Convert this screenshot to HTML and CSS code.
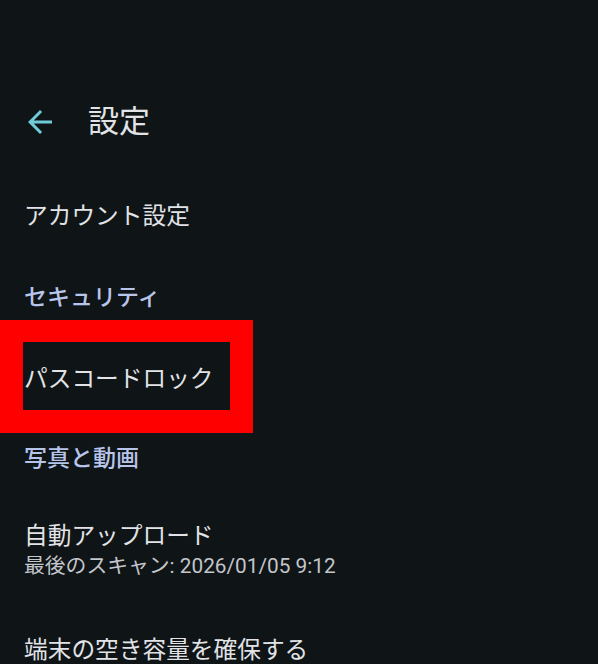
FILE: index.html
```html
<!DOCTYPE html>
<html lang="ja">
<head>
    <meta charset="utf-8">
    <title>設定</title>
    <link rel="stylesheet" href="styles.css">
</head>
<body>
    <div class="screen">
        <!-- Toolbar -->
        <div class="toolbar">
            <svg class="back" viewBox="0 0 24 24" width="36" height="36">
                <path d="M20 11H7.83l5.59-5.59L12 4l-8 8 8 8 1.41-1.41L7.83 13H20v-2z"/>
            </svg>
            <h1 class="title">設定</h1>
        </div>

        <!-- Preference list -->
        <div class="prefs">
            <div class="pref">アカウント設定</div>

            <div class="category">セキュリティ</div>
            <div class="pref marked">パスコードロック</div>

            <div class="category">写真と動画</div>
            <div class="pref two-line">
                <div>自動アップロード</div>
                <div class="summary">最後のスキャン: 2026/01/05 9:12</div>
            </div>
            <div class="pref">端末の空き容量を確保する</div>
        </div>
    </div>
</body>
</html>
```

FILE: styles.css
```css
html, body {
    margin: 0;
    padding: 0;
    background-color: #0f1417;
}

body {
    font-family: Roboto, "Noto Sans CJK JP", sans-serif;
    color: #e1e3e6;
    height: 664px;
    overflow: hidden;
}

.screen {
    padding-top: 82px;
}

.toolbar {
    display: flex;
    align-items: center;
    height: 80px;
    padding-left: 22px;
    gap: 30px;
}

.back {
    fill: #6fcbd8;
    flex: none;
}

.title {
    margin: 0;
    font-size: 31px;
    font-weight: 400;
    line-height: 40px;
}

.prefs {
    padding-top: 13px;
}

.pref {
    position: relative;
    padding: 26px 24px;
    font-size: 23.7px;
    line-height: 30px;
}

.category {
    padding: 26px 24px 25px;
    color: #b8c5ea;
    font-weight: 500;
    font-size: 23px;
    line-height: 30px;
}

.two-line {
    padding-top: 22px;
    padding-bottom: 28px;
}

.summary {
    font-size: 20.8px;
    line-height: 30px;
    color: #c3c6ca;
}

/* red highlight drawn over the passcode row */
.marked {
    padding-bottom: 24px;
}

.marked::after {
    content: "";
    position: absolute;
    left: 0;
    top: -18px;
    width: 207px;
    height: 68px;
    border: 23px solid #ff0000;
    border-top-width: 22px;
}
```
